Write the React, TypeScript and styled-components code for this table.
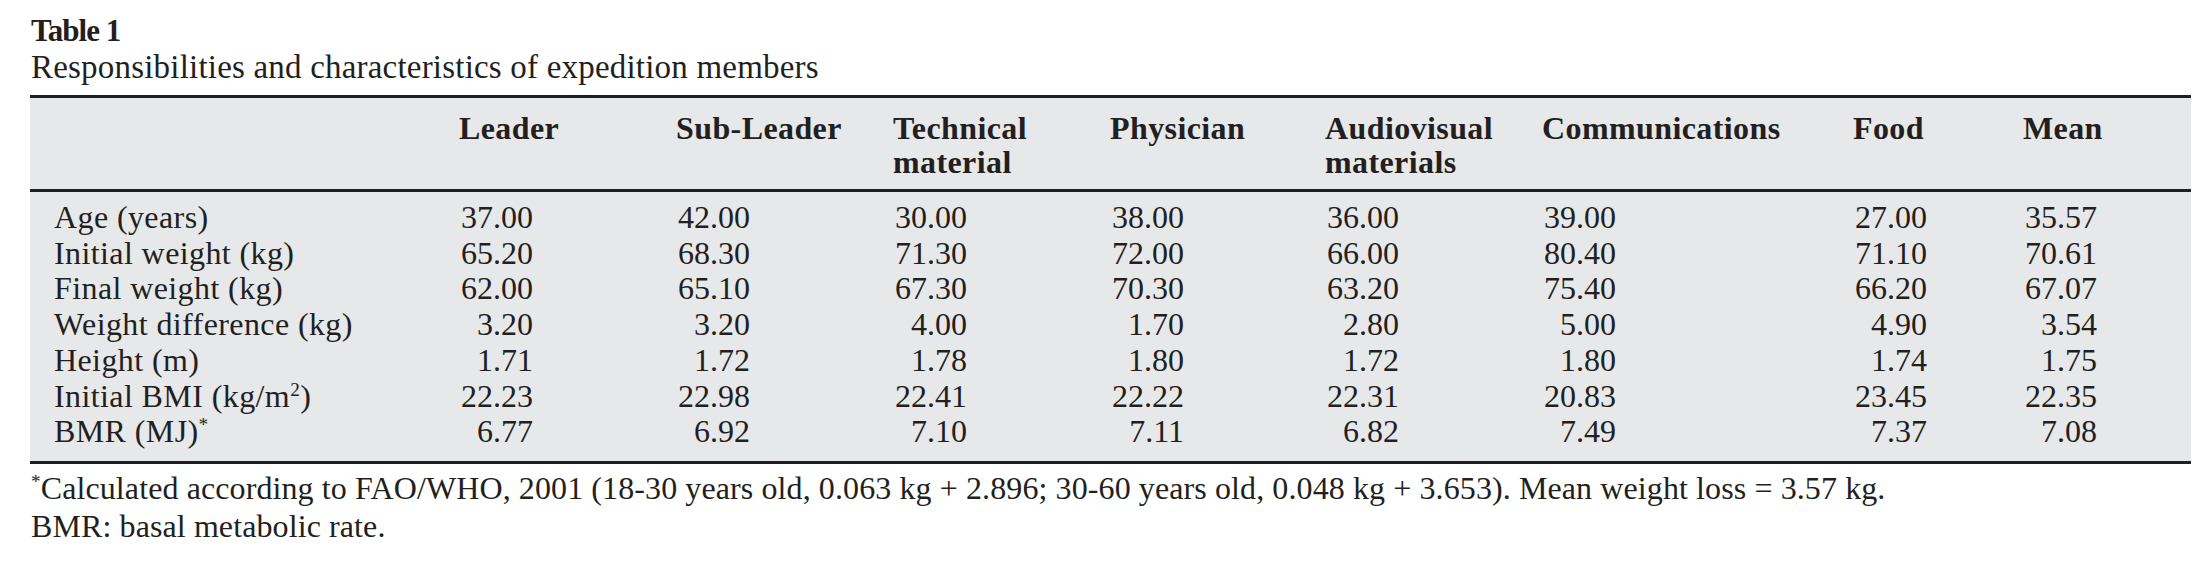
import styled, { createGlobalStyle } from "styled-components";

const GlobalStyle = createGlobalStyle`
  html, body {
    margin: 0;
    padding: 0;
    background: #ffffff;
  }
  body {
    font-family: "Liberation Serif", "Times New Roman", serif;
    color: #231f20;
  }
`;

const columns = "429px 217px 217px 217px 215px 217px 311px 170px 168px";

const Page = styled.div`
  padding: 13px 17px 0 30px;
`;

const Caption = styled.div`
  padding-left: 1px;
  font-size: 31px;
  line-height: 36px;
  font-weight: 700;
  letter-spacing: -1px;
`;

const Subtitle = styled.div`
  padding-left: 1px;
  font-size: 33px;
  line-height: 36px;
  letter-spacing: 0.2px;
  margin-bottom: 10px;
`;

const Table = styled.div`
  background: #e7e8ea;
  border-top: 3px solid #231f20;
  border-bottom: 3px solid #231f20;
  font-size: 32px;
`;

const HeaderRow = styled.div`
  display: grid;
  grid-template-columns: ${columns};
  padding: 13px 0 10px;
  border-bottom: 3px solid #231f20;
  line-height: 34px;
  font-weight: 700;
  letter-spacing: 0.4px;
`;

const HeaderCell = styled.div`
  align-self: start;
`;

const Body = styled.div`
  padding: 8px 0 11px;
`;

const Row = styled.div`
  display: grid;
  grid-template-columns: ${columns};
  line-height: 35.7px;
`;

const Label = styled.div`
  padding-left: 24px;
  white-space: nowrap;
  letter-spacing: 0.4px;
`;

const Num = styled.div`
  width: 74px;
  text-align: right;
`;

const Sup = styled.sup`
  font-size: 0.6em;
  line-height: 0;
  vertical-align: 0.55em;
`;

const Footnote = styled.div`
  margin-top: 5px;
  padding-left: 1px;
  font-size: 32px;
  line-height: 38px;
  letter-spacing: 0.1px;
  white-space: nowrap;
`;

const headers = [
  "Leader",
  "Sub-Leader",
  ["Technical", "material"],
  "Physician",
  ["Audiovisual", "materials"],
  "Communications",
  "Food",
  "Mean",
];

const rows: { label: React.ReactNode; values: string[] }[] = [
  { label: "Age (years)", values: ["37.00", "42.00", "30.00", "38.00", "36.00", "39.00", "27.00", "35.57"] },
  { label: "Initial weight (kg)", values: ["65.20", "68.30", "71.30", "72.00", "66.00", "80.40", "71.10", "70.61"] },
  { label: "Final weight (kg)", values: ["62.00", "65.10", "67.30", "70.30", "63.20", "75.40", "66.20", "67.07"] },
  { label: "Weight difference (kg)", values: ["3.20", "3.20", "4.00", "1.70", "2.80", "5.00", "4.90", "3.54"] },
  { label: "Height (m)", values: ["1.71", "1.72", "1.78", "1.80", "1.72", "1.80", "1.74", "1.75"] },
  {
    label: (
      <>
        Initial BMI (kg/m<Sup>2</Sup>)
      </>
    ),
    values: ["22.23", "22.98", "22.41", "22.22", "22.31", "20.83", "23.45", "22.35"],
  },
  {
    label: (
      <>
        BMR (MJ)<Sup>*</Sup>
      </>
    ),
    values: ["6.77", "6.92", "7.10", "7.11", "6.82", "7.49", "7.37", "7.08"],
  },
];

export default function App() {
  return (
    <Page>
      <GlobalStyle />
      <Caption>Table 1</Caption>
      <Subtitle>Responsibilities and characteristics of expedition members</Subtitle>
      <Table>
        <HeaderRow>
          <HeaderCell />
          {headers.map((h, i) => (
            <HeaderCell key={i}>
              {Array.isArray(h) ? (
                <>
                  {h[0]}
                  <br />
                  {h[1]}
                </>
              ) : (
                h
              )}
            </HeaderCell>
          ))}
          <HeaderCell />
        </HeaderRow>
        <Body>
          {rows.map((r, i) => (
            <Row key={i}>
              <Label>{r.label}</Label>
              {r.values.map((v, j) => (
                <Num key={j}>{v}</Num>
              ))}
              <div />
            </Row>
          ))}
        </Body>
      </Table>
      <Footnote>
        <Sup>*</Sup>Calculated according to FAO/WHO, 2001 (18-30 years old, 0.063 kg + 2.896; 30-60 years old, 0.048 kg + 3.653). Mean weight loss = 3.57 kg.
        <br />
        BMR: basal metabolic rate.
      </Footnote>
    </Page>
  );
}
